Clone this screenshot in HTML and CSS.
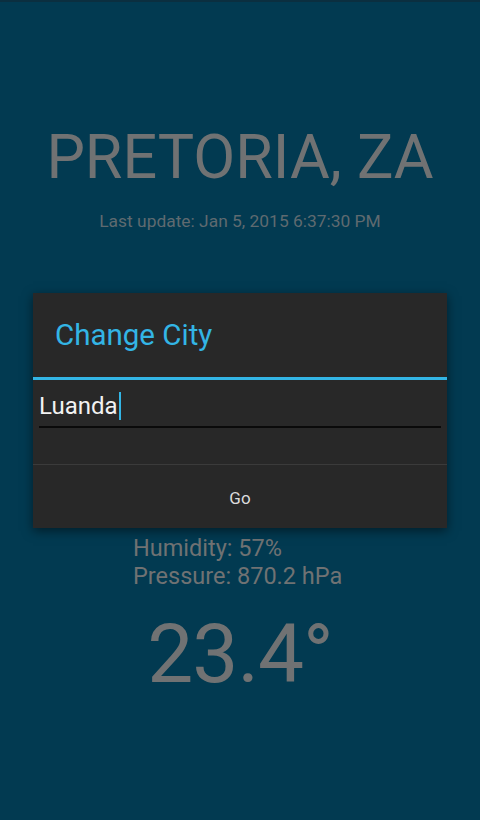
FILE: index.html
```html
<!DOCTYPE html>
<html lang="en">
<head>
  <meta charset="UTF-8">
  <meta name="viewport" content="width=device-width, initial-scale=1.0">
  <title>Weather</title>
  <link rel="stylesheet" href="styles.css">
</head>
<body>

  <div class="screen">
    <!-- Weather info -->
    <div class="weather">
      <h1 class="city">PRETORIA, ZA</h1>
      <div class="updated">Last update: Jan 5, 2015 6:37:30 PM</div>

      <div class="details">
        <div>Humidity: 57%</div>
        <div>Pressure: 870.2 hPa</div>
      </div>

      <div class="temp">23.4°</div>
    </div>

    <!-- Change city dialog -->
    <div class="dialog">
      <div class="dialog-title">Change City</div>
      <div class="dialog-body">
        <div class="field">Luanda<span class="caret"></span></div>
      </div>
      <div class="dialog-buttons">
        <button class="dialog-btn">Go</button>
      </div>
    </div>
  </div>

</body>
</html>
```

FILE: styles.css
```css
/* General Styles */
body {
  margin: 0;
  padding: 0;
  font-family: Roboto, 'Noto Sans', sans-serif;
  background: #023a51;
}

.screen {
  position: relative;
  width: 480px;
  height: 820px;
  overflow: hidden;
  background: #023a51;
  border-top: 2px solid #0b2f40;
  box-sizing: border-box;
}

.weather {
  display: flex;
  flex-direction: column;
  align-items: center;
  color: #707273;
}

.city {
  margin: 119px 0 0;
  font-size: 61px;
  font-weight: 400;
  line-height: 72px;
}

.updated {
  margin-top: 17px;
  font-size: 17.4px;
  line-height: 22px;
  color: #5f6a70;
}

.details {
  align-self: flex-start;
  margin: 302px 0 0 133px;
  font-size: 23.5px;
  line-height: 28px;
}

.temp {
  margin-top: 19px;
  font-size: 82px;
  line-height: 90px;
  letter-spacing: -1px;
}

/* Dialog */
.dialog {
  position: absolute;
  left: 33px;
  top: 291px;
  width: 414px;
  background: #282828;
  box-shadow: 0 3px 10px rgba(0, 0, 0, 0.5);
}

.dialog-title {
  height: 84px;
  padding-left: 22px;
  display: flex;
  align-items: center;
  font-size: 29.5px;
  color: #33b5e5;
  border-bottom: 3px solid #33b5e5;
}

.dialog-body {
  padding: 6px 6px 36px;
}

.field {
  height: 40px;
  display: flex;
  align-items: center;
  font-size: 24px;
  color: #f2f2f2;
  border-bottom: 2px solid #0a0a0a;
}

.caret {
  display: inline-block;
  width: 2px;
  height: 28px;
  margin-left: 1px;
  background: #33b5e5;
}

.dialog-buttons {
  border-top: 1px solid #3b3b3b;
}

.dialog-btn {
  width: 100%;
  height: 63px;
  padding-top: 3px;
  background: none;
  border: none;
  font-family: inherit;
  font-size: 17px;
  color: #dcdcdc;
}
```
